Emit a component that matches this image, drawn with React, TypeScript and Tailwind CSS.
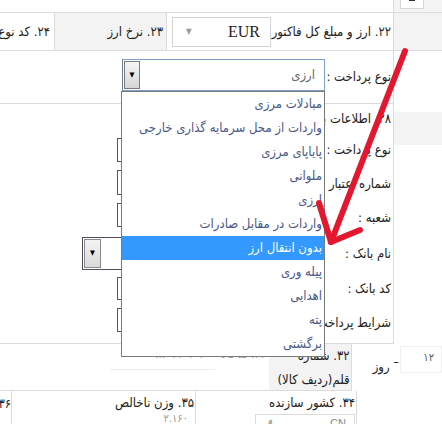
import React from "react";

const items = [
  "مبادلات مرزی",
  "واردات از محل سرمایه گذاری خارجی",
  "پایاپای مرزی",
  "ملوانی",
  "ارزی",
  "واردات در مقابل صادرات",
  "بدون انتقال ارز",
  "پیله وری",
  "اهدایی",
  "پته",
  "برگشتی",
];

function Label({ text }: { text: string }) {
  return (
    <div className="flex-1 flex justify-end items-center pr-[2px] h-full">
      <span dir="rtl" className="whitespace-nowrap">
        {text}
      </span>
    </div>
  );
}

function FormRow({
  h,
  label,
  inputTop,
  inputH,
  select,
}: {
  h: string;
  label: string;
  inputTop: string;
  inputH: string;
  select?: boolean;
}) {
  return (
    <div className={`flex ${h}`}>
      {select ? (
        <div className={`ml-[82px] w-[235px] ${inputTop} ${inputH} border border-[#4d4d5e] bg-white flex p-[1px]`}>
          <div className="w-[17px] h-full border border-[#8a8a8a] bg-gradient-to-b from-[#f4f4f4] to-[#d9d9d9] flex items-center justify-center">
            <span className="text-[7px] leading-none text-black">▼</span>
          </div>
        </div>
      ) : (
        <div className={`ml-[117px] w-[200px] ${inputTop} ${inputH} border border-[#555] bg-white`} />
      )}
      <Label text={label} />
    </div>
  );
}

export default function App() {
  return (
    <div className="relative w-[442px] h-[424px] overflow-hidden bg-white font-['DejaVu_Sans_Condensed','DejaVu_Sans',sans-serif] text-[13px] text-[#222]">
      {/* row 0 */}
      <div className="flex h-[13px] border-b border-[#dcdcdc]">
        <div className="w-[393px]" />
        <div className="w-[49px] border-l border-[#dcdcdc] bg-[#f3f3f3] flex">
          <div className="ml-[6px] w-[24px] h-[9px] bg-white border border-t-0 border-[#d6d6d6] flex justify-center">
            <div className="w-[6px] h-[1px] bg-[#333]" />
          </div>
        </div>
      </div>

      {/* row 1 */}
      <div className="flex h-[38px] border-b border-[#dcdcdc]">
        <div className="w-[55px] border-r border-[#dcdcdc] flex items-center justify-end overflow-hidden pr-[4px]">
          <span dir="rtl" className="whitespace-nowrap">۲۴. کد نوع معامله</span>
        </div>
        <div className="w-[112px] border-r border-[#dcdcdc] bg-[#f3f3f3] flex items-center justify-end pr-[3px]">
          <span dir="rtl" className="whitespace-nowrap">۲۳. نرخ ارز</span>
        </div>
        <div className="w-[226px] flex items-center">
          <div className="ml-[5px] w-[99px] h-[30px] border border-[#d4d4d4] bg-white flex items-center">
            <span className="ml-[13px] text-[8px] text-[#9a9a9a] leading-none">▼</span>
            <span className="ml-auto mr-[10px] font-['Liberation_Serif',serif] text-[16px] text-[#222]">EUR</span>
          </div>
          <Label text="۲۲. ارز و مبلغ کل فاکتور" />
        </div>
        <div className="w-[49px] border-l border-[#dcdcdc] bg-[#f3f3f3]" />
      </div>

      {/* payment section */}
      <div className="flex h-[293px]">
        <div className="w-[393px] flex flex-col border-b border-[#dcdcdc]">
          <div className="flex h-[53px] border-b border-[#dcdcdc]">
            <div className="relative z-10 ml-[122px] mt-[8px] w-[203px] h-[32px] border border-[#7f9dc9] border-l-[#6e7a90] bg-white flex p-[1px]">
              <div className="w-[16px] h-full border border-[#7a7a7a] bg-gradient-to-b from-[#f6f6f6] to-[#d6d6d6] flex items-center justify-center">
                <span className="text-[7px] leading-none text-black">▼</span>
              </div>
              <div className="flex-1 flex items-center justify-end pr-[8px]">
                <span dir="rtl" className="text-[#666] text-[13px]">ارزی</span>
              </div>
              {/* open list */}
              <div className="absolute left-[-2px] top-[31px] w-[204px] h-[266px] border border-[#7a7a7a] bg-white">
                {items.map((it, i) => (
                  <div
                    key={i}
                    className={`h-[24px] flex items-center justify-end pr-[2px] ${
                      i === 6 ? "bg-[#3399ff] text-white" : "text-[#4b5889]"
                    }`}
                  >
                    <span dir="rtl" className="whitespace-nowrap text-[13px]">{it}</span>
                  </div>
                ))}
              </div>
            </div>
            <Label text="نوع پرداخت :" />
          </div>
          <div className="flex h-[29px]">
            <Label text="۲۸. اطلاعات بانکی" />
          </div>
          <FormRow h="h-[34px]" label="نوع پرداخت :" inputTop="mt-[5px]" inputH="h-[24px]" />
          <FormRow h="h-[33px]" label="شماره اعتبار اسنادی :" inputTop="mt-[3px]" inputH="h-[25px]" />
          <FormRow h="h-[35px]" label="شعبه :" inputTop="mt-[3px]" inputH="h-[24px]" />
          <FormRow h="h-[37px]" label="نام بانک :" inputTop="mt-[2px]" inputH="h-[33px]" select />
          <FormRow h="h-[33px]" label="کد بانک :" inputTop="mt-[5px]" inputH="h-[23px]" />
          <FormRow h="h-[35px]" label="شرایط پرداخت :" inputTop="mt-[3px]" inputH="h-[24px]" />
        </div>
        <div className="w-[49px] border-l border-[#dcdcdc] flex flex-col">
          <div className="h-[61px]" />
          <div className="h-[33px] bg-[#f3f3f3]" />
        </div>
      </div>

      {/* row 3 */}
      <div className="flex h-[47px]">
        <div className="w-[273px] border-b border-[#dcdcdc] flex flex-col">
          <div className="h-[22px] flex items-center justify-end pr-[4px] text-[#9a9a9a] text-[11px]">
            <span dir="rtl" className="whitespace-nowrap">۳۱. کد کالا &nbsp;&nbsp; ۸۷۰۳۱۰۱۰۱۰</span>
          </div>
          <div className="ml-[110px] w-[105px] h-[4px] border-b border-[#ececec]" />
        </div>
        <div className="w-[84px] border-b border-r border-[#dcdcdc] bg-[#f3f3f3] overflow-hidden flex flex-col items-end pr-[1px] leading-[24px]">
          <span dir="rtl" className="whitespace-nowrap">۳۲. شماره</span>
          <span dir="rtl" className="whitespace-nowrap">قلم(ردیف کالا)</span>
        </div>
        <div className="flex-1 flex pt-[2px]">
          <div className="ml-[21px] mt-[14px] text-[13px] leading-none" dir="rtl">روز</div>
          <div className="ml-[4px] mt-[10px] text-[12px] leading-none">–</div>
          <div className="ml-[1px] w-[42px] h-[27px] border border-[#f0f0f0] flex justify-end pr-[7px] pt-[3px] text-[#555] text-[11px]">
            <span dir="rtl">۱۲</span>
          </div>
        </div>
      </div>

      {/* row 4 */}
      <div className="flex h-[33px]">
        <div className="w-[12px] border-r border-[#dcdcdc] overflow-hidden flex justify-end pt-[3px]">
          <span dir="rtl" className="whitespace-nowrap">۳۶. وزن</span>
        </div>
        <div className="w-[184px] border-r border-[#dcdcdc] flex flex-col items-end pr-[1px] pt-[2px]">
          <span dir="rtl" className="whitespace-nowrap leading-[19px]">۳۵. وزن ناخالص</span>
          <span dir="rtl" className="whitespace-nowrap text-[#999] text-[11px] leading-[14px] mr-[6px]">۲.۱۶۰</span>
        </div>
        <div className="w-[161px] border-r border-[#dcdcdc] flex flex-col items-end pr-[1px] pt-[2px]">
          <span dir="rtl" className="whitespace-nowrap leading-[19px]">۳۴. کشور سازنده</span>
          <div className="w-[100px] h-[20px] mt-[2px] border border-[#dcdcdc] flex items-start">
            <span className="ml-[12px] text-[#aaa] text-[10px]">◖</span>
            <span className="ml-auto mr-[8px] text-[#888] text-[11px] font-['Liberation_Sans',sans-serif]">CN</span>
          </div>
        </div>
        <div className="flex-1" />
      </div>

      {/* red arrow */}
      <svg className="absolute inset-0 z-20 pointer-events-none" width="442" height="424" viewBox="0 0 442 424">
        <g stroke="#e3172f" strokeWidth="6" strokeLinecap="round" strokeLinejoin="round" fill="none">
          <line x1="405" y1="51" x2="331" y2="242" />
          <polyline points="319,203 331,242 360,230" />
        </g>
      </svg>
    </div>
  );
}
